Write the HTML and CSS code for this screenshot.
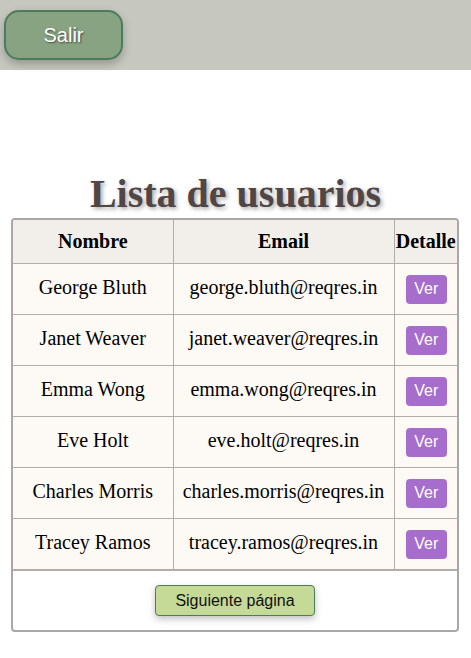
FILE: index.html
```html
<!DOCTYPE html>
<html lang="es">
<head>
<meta charset="utf-8">
<title>Lista de usuarios</title>
<link rel="stylesheet" href="styles.css">
</head>
<body>
<header class="topbar">
  <button class="btn-salir">Salir</button>
</header>
<h1 class="title">Lista de usuarios</h1>
<div class="card">
  <table class="users">
    <colgroup>
      <col class="c-name">
      <col class="c-email">
      <col class="c-detail">
    </colgroup>
    <thead>
      <tr><th>Nombre</th><th>Email</th><th class="detail">Detalle</th></tr>
    </thead>
    <tbody>
      <tr><td>George Bluth</td><td>george.bluth@reqres.in</td><td class="detail"><button class="btn-ver">Ver</button></td></tr>
      <tr><td>Janet Weaver</td><td>janet.weaver@reqres.in</td><td class="detail"><button class="btn-ver">Ver</button></td></tr>
      <tr><td>Emma Wong</td><td>emma.wong@reqres.in</td><td class="detail"><button class="btn-ver">Ver</button></td></tr>
      <tr><td>Eve Holt</td><td>eve.holt@reqres.in</td><td class="detail"><button class="btn-ver">Ver</button></td></tr>
      <tr><td>Charles Morris</td><td>charles.morris@reqres.in</td><td class="detail"><button class="btn-ver">Ver</button></td></tr>
      <tr><td>Tracey Ramos</td><td>tracey.ramos@reqres.in</td><td class="detail"><button class="btn-ver">Ver</button></td></tr>
    </tbody>
  </table>
  <div class="pager">
    <button class="btn-next">Siguiente página</button>
  </div>
</div>
</body>
</html>
```

FILE: styles.css
```css
html, body {
  margin: 0;
  padding: 0;
  background: #ffffff;
  font-family: "Liberation Serif", "Times New Roman", serif;
}

.topbar {
  height: 70px;
  background: #c6c8bf;
  padding: 10px 4px 0;
  box-sizing: border-box;
}

.btn-salir {
  width: 119px;
  height: 50px;
  background: #88a382;
  border: 2px solid #4c7d5a;
  border-radius: 15px;
  color: #ffffff;
  font-family: "Liberation Sans", Arial, sans-serif;
  font-size: 20px;
  text-shadow: 1px 1px 2px rgba(0, 0, 0, 0.55);
  box-shadow: 0 4px 8px rgba(0, 0, 0, 0.25);
  padding: 0;
  cursor: pointer;
}

.title {
  margin: 101px 0 1px;
  text-align: center;
  font-size: 40px;
  line-height: 46px;
  font-weight: bold;
  color: #504646;
  text-shadow: 2px 2px 4px rgba(0, 0, 0, 0.35);
}

.card {
  margin: 0 12px 0 11px;
  border: 2px solid #a9a7a7;
  border-radius: 4px;
  overflow: hidden;
  background: #ffffff;
}

.users {
  width: 100%;
  border-collapse: collapse;
  table-layout: fixed;
}

.c-name { width: 160px; }
.c-email { width: 221px; }
.c-detail { width: 63px; }

.users th,
.users td {
  border: 1px solid #b0adab;
  text-align: center;
  vertical-align: middle;
  padding: 0 4px;
  font-size: 20px;
  color: #000000;
  white-space: nowrap;
}

.users tr > :first-child { border-left: none; }
.users tr > :last-child { border-right: none; }
.users thead tr th { border-top: none; }

.users th {
  background: #f2efeb;
  font-weight: bold;
  height: 43px;
}

.users td {
  background: #fdfaf6;
  height: 46px;
  padding-bottom: 4px;
}

.users .detail {
  padding: 0 1px;
}

.users td.detail {
  padding: 0 1px 0 2px;
}

.btn-ver {
  background: #a66dcc;
  color: #ffffff;
  border: none;
  border-radius: 4px;
  font-family: "Liberation Sans", Arial, sans-serif;
  font-size: 16px;
  width: 41px;
  height: 29px;
  padding: 0;
  margin-top: 0;
  cursor: pointer;
}

.pager {
  border-top: 1px solid #b0adab;
  padding: 14px 0 14px;
  display: flex;
  justify-content: center;
}

.btn-next {
  width: 160px;
  height: 31px;
  background: #c5da96;
  border: 1px solid #4c7d5a;
  border-radius: 4px;
  color: #111111;
  font-family: "Liberation Sans", Arial, sans-serif;
  font-size: 16px;
  padding: 0;
  box-shadow: 0 3px 7px rgba(0, 0, 0, 0.25);
  cursor: pointer;
}
```
